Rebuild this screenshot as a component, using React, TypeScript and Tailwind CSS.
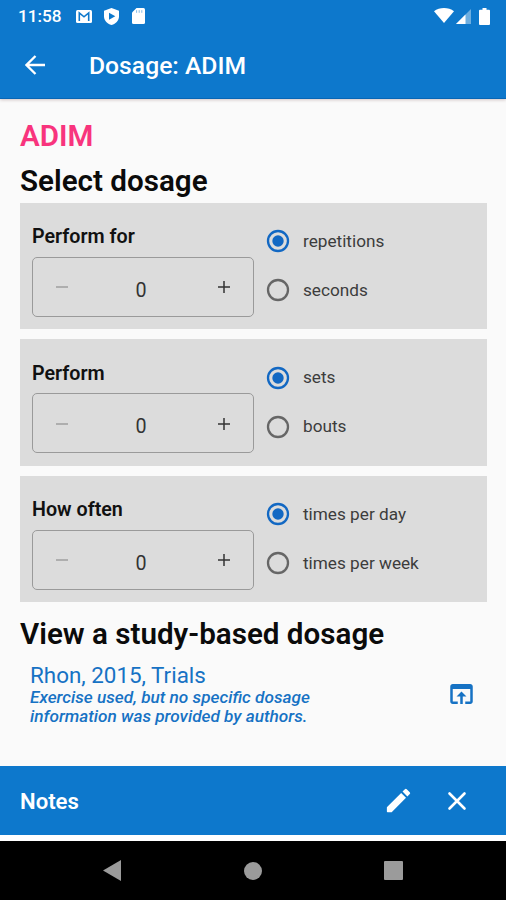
import React, { useState } from 'react';

interface DosageField {
  title: string;
  options: [string, string];
}

const FIELDS: DosageField[] = [
  { title: 'Perform for', options: ['repetitions', 'seconds'] },
  { title: 'Perform', options: ['sets', 'bouts'] },
  { title: 'How often', options: ['times per day', 'times per week'] },
];

const StatusBar: React.FC = () => (
  <div className="flex h-8 items-center pl-[18px] pr-4">
    <span className="w-[58px] pt-px text-[17.2px] leading-none font-medium">11:58</span>
    <svg className="h-[13px] w-4" viewBox="0 0 16 13" fill="none">
      <rect width="16" height="13" rx="1.5" fill="#fff" />
      <path d="M3.3 11V3l4.7 3.8L12.7 3v8" stroke="#0d78cc" strokeWidth="1.6" />
    </svg>
    <svg className="ml-3 h-[17px] w-[15px]" viewBox="0 0 15 17">
      <path d="M7.5 0 15 2.8v5.4c0 4.2-3 7.5-7.5 8.8C3 15.7 0 12.4 0 8.2V2.8z" fill="#fff" />
      <path d="M5 4.7 11.3 8.2 5 11.7z" fill="#0d78cc" />
    </svg>
    <svg className="ml-[13px] h-4 w-[13px]" viewBox="0 0 13 16">
      <path d="M4.5 0H11.5Q13 0 13 1.5V14.5Q13 16 11.5 16H1.5Q0 16 0 14.5V4.5z" fill="#fff" />
      <path d="M4.6 2.2v2.6M7.2 2.2v2.6M9.8 2.2v2.6" stroke="#0d78cc" strokeWidth="1" opacity="0.5" />
    </svg>
    <div className="ml-auto flex items-center">
      <svg className="mb-px h-[15px] w-5" viewBox="0 0 20 15">
        <path d="M0 3.2C5.5-1 14.5-1 20 3.2L10 15z" fill="#fff" />
      </svg>
      <svg className="ml-[2px] h-[15px] w-[15px]" viewBox="0 0 15 15">
        <path d="M15 0v15H0z" fill="#fff" opacity="0.4" />
        <path d="M9.5 5.5V15H0z" fill="#fff" />
      </svg>
      <svg className="ml-[8px] h-[17px] w-[11px]" viewBox="0 0 11 17">
        <path d="M3.5 0h4v1.7H10Q11 1.7 11 2.7V16Q11 17 10 17H1Q0 17 0 16V2.7Q0 1.7 1 1.7H3.5z" fill="#fff" />
      </svg>
    </div>
  </div>
);

const AppBar: React.FC = () => (
  <header className="z-10 h-[99px] shrink-0 border-b border-[#0866b5] bg-[#0d78cc] text-white shadow-[0_1px_3px_rgba(90,40,40,0.25)]">
    <StatusBar />
    <div className="flex h-[66px] items-center pl-[25px]">
      <svg className="h-5 w-5" viewBox="0 0 20 20" fill="none" stroke="currentColor" strokeWidth="2.3">
        <path d="M20 10H2M10.5 1 1.5 10l9 9" />
      </svg>
      <h1 className="ml-11 pt-0.5 text-[24.7px] leading-none font-medium">Dosage: ADIM</h1>
    </div>
  </header>
);

const Stepper: React.FC = () => {
  const [count, setCount] = useState(0);

  return (
    <div className="flex h-[60px] w-[222px] items-center rounded-[5px] border-[1.5px] border-[#9a9a9a]">
      <button
        className="flex h-full w-[58px] items-center justify-center pt-px text-[#9f9f9f]"
        onClick={() => setCount(Math.max(0, count - 1))}
      >
        <svg className="h-3 w-3" viewBox="0 0 12 12" stroke="currentColor" strokeWidth="1.5">
          <path d="M0 6h12" />
        </svg>
      </button>
      <span className="flex-1 pt-[8px] pr-1 text-center text-[19.7px] leading-none text-[#333]">{count}</span>
      <button
        className="flex h-full w-[58px] items-center justify-center pt-px text-[#333]"
        onClick={() => setCount(count + 1)}
      >
        <svg className="h-3 w-3" viewBox="0 0 12 12" stroke="currentColor" strokeWidth="1.5">
          <path d="M0 6h12M6 0v12" />
        </svg>
      </button>
    </div>
  );
};

const RadioOption: React.FC<{ label: string; checked: boolean; onSelect: () => void }> = ({
  label,
  checked,
  onSelect,
}) => (
  <button className="flex h-6 items-center" onClick={onSelect}>
    <svg className="h-6 w-6" viewBox="0 0 24 24" fill="none">
      <circle cx="12" cy="12" r="10" stroke={checked ? '#1268c3' : '#666'} strokeWidth="2.3" />
      {checked && <circle cx="12" cy="12" r="5.7" fill="#1268c3" />}
    </svg>
    <span className="ml-[13px] pt-px text-[17.2px] leading-none text-[#3c3c3c]">{label}</span>
  </button>
);

const DosageCard: React.FC<{ field: DosageField }> = ({ field }) => {
  const [selected, setSelected] = useState(0);

  return (
    <section className="flex h-[126.5px] w-[467px] bg-[#dcdcdc] pl-3">
      <div className="pt-[21.5px]">
        <h3 className="mb-[7.5px] h-[25px] text-[19.7px] leading-[25px] font-semibold text-[#111]">{field.title}</h3>
        <Stepper />
      </div>
      <div className="ml-3 flex flex-col gap-[25px] pt-[26.5px]">
        {field.options.map((label, i) => (
          <RadioOption key={label} label={label} checked={selected === i} onSelect={() => setSelected(i)} />
        ))}
      </div>
    </section>
  );
};

const StudyLink: React.FC = () => (
  <div className="flex h-[68px] items-center justify-between pt-2 pr-[29px] pl-[10px] text-[#1672c4]">
    <div>
      <div className="text-[22.4px] leading-[26px]">Rhon, 2015, Trials</div>
      <p className="w-[300px] text-[17.2px] leading-[19.5px] font-medium italic">
        Exercise used, but no specific dosage
        <br />
        information was provided by authors.
      </p>
    </div>
    <svg className="h-[30px] w-[31px]" viewBox="0 0 24 24" fill="currentColor">
      <path d="M19 4H5c-1.11 0-2 .9-2 2v12c0 1.1.89 2 2 2h4v-2H5V8h14v10h-4v2h4c1.1 0 2-.9 2-2V6c0-1.1-.89-2-2-2zm-7 6l-4 4h3v6h2v-6h3l-4-4z" />
    </svg>
  </div>
);

const NotesBar: React.FC = () => (
  <footer className="flex h-[69px] shrink-0 items-center bg-[#0d78cc] pr-[39px] pl-5 text-white">
    <h2 className="pt-0.5 text-[22.1px] leading-none font-semibold">Notes</h2>
    <svg className="ml-auto h-[31px] w-[31px]" viewBox="0 0 24 24" fill="currentColor">
      <path d="M3 17.46v3.04c0 .28.22.5.5.5h3.04c.13 0 .26-.05.35-.15L17.81 9.94l-3.75-3.75L3.15 17.1c-.1.1-.15.22-.15.36zM20.71 7.04a.996.996 0 0 0 0-1.41l-2.34-2.34a.996.996 0 0 0-1.41 0l-1.83 1.83 3.75 3.75 1.83-1.83z" />
    </svg>
    <svg className="ml-[33px] h-5 w-5" viewBox="0 0 20 20" stroke="currentColor" strokeWidth="2.6" strokeLinecap="round">
      <path d="M2.5 2.5l15 15M17.5 2.5l-15 15" />
    </svg>
  </footer>
);

const NavigationBar: React.FC = () => (
  <nav className="flex h-[59px] shrink-0 items-center justify-between bg-black px-[103px]">
    <svg className="h-[21px] w-[18px]" viewBox="0 0 18 21" fill="#9b9b9b">
      <path d="M18 0v21L0 10.5z" />
    </svg>
    <span className="size-[18px] rounded-full bg-[#9b9b9b]" />
    <span className="size-[19px] rounded-[1px] bg-[#9b9b9b]" />
  </nav>
);

const App: React.FC = () => (
  <div className="flex h-[900px] w-[506px] flex-col overflow-hidden bg-[#fafafa] font-[Roboto,sans-serif]">
    <AppBar />
    <main className="flex-1 pl-5">
      <h2 className="pt-[19px] text-[29.6px] leading-[36px] font-semibold text-[#f8347d]">ADIM</h2>
      <h2 className="pt-[9px] pb-[3.5px] text-[29.6px] leading-[36px] font-semibold text-[#0b0b0b]">Select dosage</h2>
      <div className="flex flex-col gap-[10px]">
        {FIELDS.map((field) => (
          <DosageCard key={field.title} field={field} />
        ))}
      </div>
      <h2 className="pt-[14px] pb-[4px] text-[29.6px] leading-[36px] font-semibold text-[#0b0b0b]">
        View a study-based dosage
      </h2>
      <StudyLink />
    </main>
    <NotesBar />
    <div className="h-[6px] shrink-0 bg-white" />
    <NavigationBar />
  </div>
);

export default App;
